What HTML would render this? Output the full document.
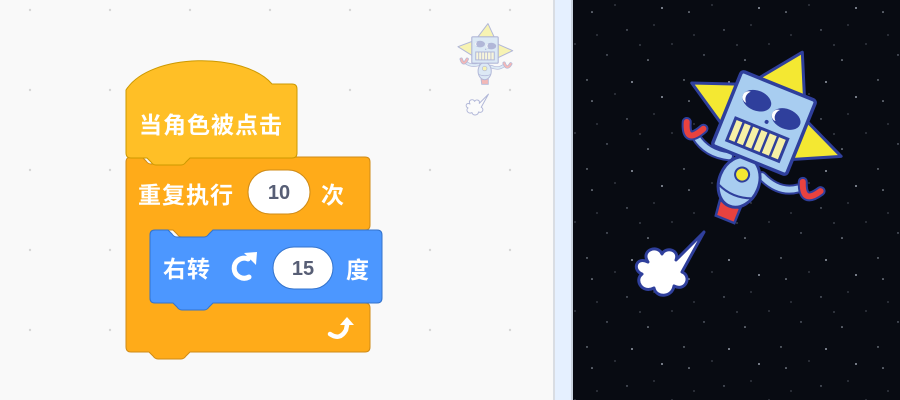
<!DOCTYPE html>
<html><head><meta charset="utf-8"><style>
html,body{margin:0;padding:0;width:900px;height:400px;overflow:hidden;background:#f9f9f9}
svg{display:block}
text{font-family:"Liberation Sans","Noto Sans CJK SC",sans-serif}
</style></head><body>
<svg width="900" height="400" viewBox="0 0 900 400" xmlns="http://www.w3.org/2000/svg">
<defs>
<pattern id="dots" width="80" height="80" patternUnits="userSpaceOnUse" x="-10" y="-30">
<circle cx="40" cy="40" r="1.2" fill="#d6d6d6"/></pattern>
<pattern id="stars" width="97" height="89" patternUnits="userSpaceOnUse">
<circle cx="10" cy="12" r="0.8" fill="#aab3c0"/><circle cx="45" cy="30" r="0.7" fill="#8891a0"/><circle cx="80" cy="8" r="0.9" fill="#c0c8d4"/>
<circle cx="25" cy="55" r="0.7" fill="#8891a0"/><circle cx="66" cy="60" r="0.8" fill="#aab3c0"/><circle cx="90" cy="44" r="0.6" fill="#777f8c"/>
<circle cx="5" cy="80" r="0.7" fill="#aab3c0"/><circle cx="50" cy="82" r="0.9" fill="#c0c8d4"/><circle cx="33" cy="5" r="0.6" fill="#777f8c"/>
<circle cx="72" cy="25" r="0.6" fill="#777f8c"/><circle cx="58" cy="45" r="0.6" fill="#8891a0"/><circle cx="15" cy="35" r="0.6" fill="#777f8c"/>
</pattern>
<g id="robot">
 <polygon points="-26,-34 9,-80 32,-30" fill="#f4e832" stroke="#2f3f9c" stroke-width="3" stroke-linejoin="round"/>
 <polygon points="-34,-28 -82,-10 -34,20" fill="#f4e832" stroke="#2f3f9c" stroke-width="3" stroke-linejoin="round"/>
 <polygon points="34,-20 84,2 34,26" fill="#f4e832" stroke="#2f3f9c" stroke-width="3" stroke-linejoin="round"/>
 <path d="M-20,44 Q-42,50 -58,38" fill="none" stroke="#2f3f9c" stroke-width="10" stroke-linecap="round"/>
 <path d="M-20,44 Q-42,50 -58,38" fill="none" stroke="#a8cdf0" stroke-width="6" stroke-linecap="round"/>
 <path d="M18,50 Q40,60 56,48" fill="none" stroke="#2f3f9c" stroke-width="10" stroke-linecap="round"/>
 <path d="M18,50 Q40,60 56,48" fill="none" stroke="#a8cdf0" stroke-width="6" stroke-linecap="round"/>
 <path d="M-72,28 Q-65,50 -54,28" fill="none" stroke="#2f3f9c" stroke-width="10" stroke-linecap="round"/>
 <path d="M-72,28 Q-65,50 -54,28" fill="none" stroke="#e8423f" stroke-width="6" stroke-linecap="round"/>
 <path d="M58,40 Q66,62 78,42" fill="none" stroke="#2f3f9c" stroke-width="10" stroke-linecap="round"/>
 <path d="M58,40 Q66,62 78,42" fill="none" stroke="#e8423f" stroke-width="6" stroke-linecap="round"/>
 <path d="M-12,88 L-10,104 L10,104 L10,88 Z" fill="#e8423f" stroke="#2f3f9c" stroke-width="2.5"/>
 <ellipse cx="-1" cy="64" rx="20" ry="26" fill="#a8cdf0" stroke="#2f3f9c" stroke-width="3"/>
 <circle cx="-1" cy="56" r="7" fill="#f4e832" stroke="#2f3f9c" stroke-width="2"/>
 <path d="M-19,74 Q-1,82 18,74" fill="none" stroke="#2f3f9c" stroke-width="2"/>
 <rect x="-40" y="-40" width="80" height="80" rx="3" fill="#a8cdf0" stroke="#2f3f9c" stroke-width="3.5"/>
 <ellipse cx="-15" cy="-18" rx="15" ry="10" fill="#2f3f9c"/>
 <ellipse cx="19" cy="-12" rx="15" ry="10" fill="#2f3f9c"/>
 <path d="M-24,-24 a6,6 0 0 0 0,12 a8,8 0 0 1 0,-12z" fill="#fff"/>
 <path d="M10,-18 a6,6 0 0 0 0,12 a8,8 0 0 1 0,-12z" fill="#fff"/>
 <circle cx="2" cy="-2" r="2" fill="#2f3f9c"/>
 <rect x="-28" y="6" width="56" height="24" fill="#f6f0a6" stroke="#2f3f9c" stroke-width="3"/>
 <path d="M-19,6v24M-10,6v24M-1,6v24M8,6v24M18,6v24" stroke="#2f3f9c" stroke-width="2.5"/>
</g>
<g id="cloud">
 <path d="M0,0 C-8,-12 10,-18 14,-8 C18,-16 32,-12 28,-2 L56,-30 L34,10 C44,14 38,30 26,24 C24,36 8,36 6,26 C-6,32 -14,18 -6,12 C-16,8 -12,-6 0,0 Z" fill="#fff" stroke="#2f3f9c" stroke-width="3" stroke-linejoin="round"/>
</g>
</defs>
<rect x="0" y="0" width="553" height="400" fill="#f9f9f9"/>
<rect x="0" y="0" width="553" height="400" fill="url(#dots)"/>
<g opacity="0.35" transform="translate(485,50) scale(0.33)"><use href="#robot"/></g>
<g opacity="0.35" transform="translate(470,104) scale(0.33)"><use href="#cloud"/></g>
<rect x="553" y="0" width="2" height="400" fill="#d9dde3"/>
<rect x="555" y="0" width="16" height="400" fill="#e5f0ff"/>
<rect x="571" y="0" width="2" height="400" fill="#c8d2de"/>
<rect x="573" y="0" width="327" height="400" fill="#080b12"/>
<rect x="573" y="0" width="327" height="400" fill="url(#stars)"/>
<g transform="translate(764,123) rotate(22)"><use href="#robot"/></g>
<g transform="translate(648,262)"><use href="#cloud"/></g>

<path d="M126,162 Q126,157 131,157 H142 l4,4 q2,3 5,3 H178 q3,0 5,-3 l4,-4 H365 Q370,157 370,162 V225 Q370,230 365,230 H213 l-4,4 q-2,3 -5,3 H182 q-3,0 -5,-3 l-4,-4 H155 Q150,230 150,235 V298 Q150,303 155,303 H365 Q370,303 370,308 V347 Q370,352 365,352 H190 l-4,4 q-2,3 -5,3 H158 q-3,0 -5,-3 l-4,-4 H131 Q126,352 126,347 Z" fill="#ffab19" stroke="#cf8b17" stroke-width="1"/>
<path d="M126,90 C150,52 245,52 272,84 H292 Q297,84 297,89 V153 Q297,158 292,158 H190 l-4,4 q-2,3 -5,3 H156 q-3,0 -5,-3 l-4,-4 H131 Q126,158 126,153 Z" fill="#ffbf26" stroke="#cc9900" stroke-width="1"/>
<text x="139" y="133" font-size="23" font-weight="bold" fill="#fff" letter-spacing="1">当角色被点击</text>
<text x="138" y="203" font-size="23" font-weight="bold" fill="#fff" letter-spacing="1">重复执行</text>
<rect x="248" y="170" width="62" height="44" rx="22" fill="#fff" stroke="#cf8b17" stroke-width="1"/>
<text x="279" y="199" font-size="20" font-weight="bold" fill="#575e75" text-anchor="middle">10</text>
<text x="321" y="203" font-size="23" font-weight="bold" fill="#fff">次</text>
<path d="M150,235 Q150,230 155,230 H168 l4,4 q2,3 5,3 H204 q3,0 5,-3 l4,-4 H377 Q382,230 382,235 V298 Q382,303 377,303 H213 l-4,4 q-2,3 -5,3 H182 q-3,0 -5,-3 l-4,-4 H155 Q150,303 150,298 Z" fill="#4c97ff" stroke="#3373cc" stroke-width="1"/>
<text x="163" y="277" font-size="23" font-weight="bold" fill="#fff" letter-spacing="1">右转</text>
<path d="M248,259 A10,10 0 1 0 249,277" fill="none" stroke="#fff" stroke-width="5" stroke-linecap="round"/>
<polygon points="244,253 257,252 256,265" fill="#fff"/>
<rect x="273" y="247" width="60" height="42" rx="21" fill="#fff" stroke="#3373cc" stroke-width="1"/>
<text x="303" y="275" font-size="20" font-weight="bold" fill="#575e75" text-anchor="middle">15</text>
<text x="346" y="278" font-size="23" font-weight="bold" fill="#fff">度</text>
<path d="M330,334 Q340,341 346,330 L347,325" fill="none" stroke="#fff" stroke-width="4.5" stroke-linecap="round"/>
<polygon points="340,325 347,317 354,325" fill="#fff"/>
</svg>
</body></html>
